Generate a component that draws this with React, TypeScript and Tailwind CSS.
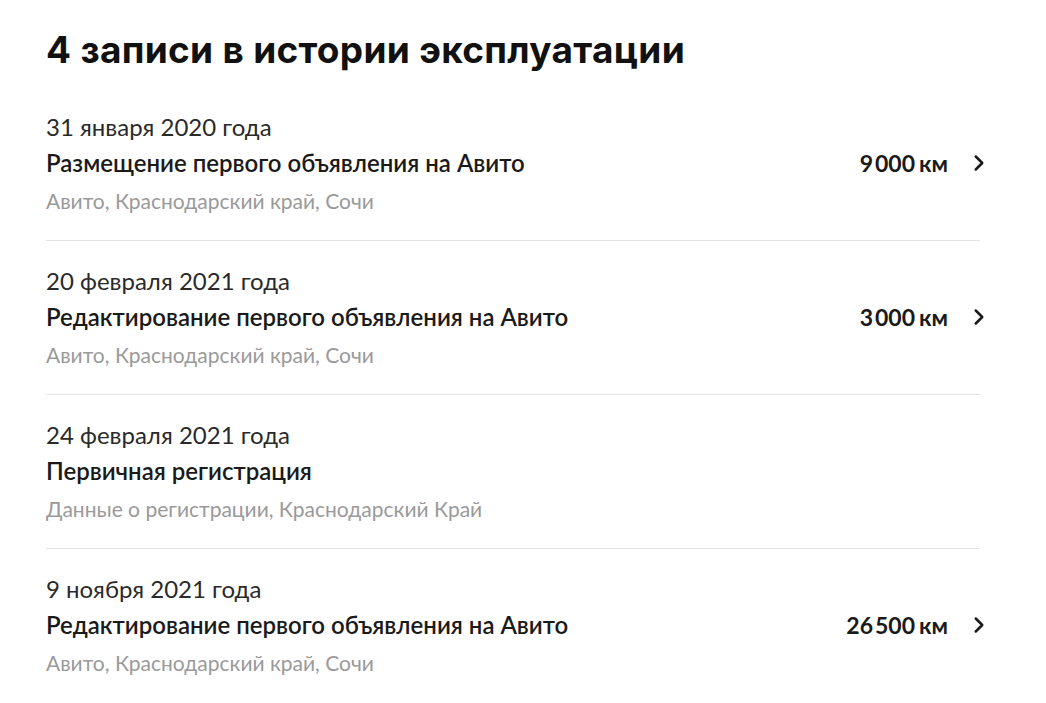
import { ChevronRight } from "lucide-react";

type HistoryEntry = {
  date: string;
  title: string;
  source: string;
  mileage?: string;
};

const ENTRIES: HistoryEntry[] = [
  {
    date: "31 января 2020 года",
    title: "Размещение первого объявления на Авито",
    source: "Авито, Краснодарский край, Сочи",
    mileage: "9 000",
  },
  {
    date: "20 февраля 2021 года",
    title: "Редактирование первого объявления на Авито",
    source: "Авито, Краснодарский край, Сочи",
    mileage: "3 000",
  },
  {
    date: "24 февраля 2021 года",
    title: "Первичная регистрация",
    source: "Данные о регистрации, Краснодарский Край",
  },
  {
    date: "9 ноября 2021 года",
    title: "Редактирование первого объявления на Авито",
    source: "Авито, Краснодарский край, Сочи",
    mileage: "26 500",
  },
];

function Mileage({ value }: { value: string }) {
  const [thousands, rest] = value.split(" ");
  return (
    <span className="flex items-baseline text-[23px] leading-[30px] font-bold text-[#1a1a1a]">
      <span>{thousands}</span>
      <span className="ml-[2px]">{rest}</span>
      <span className="ml-[4px]">км</span>
    </span>
  );
}

function EntryRow({ entry, last }: { entry: HistoryEntry; last: boolean }) {
  return (
    <div
      className={
        last
          ? "flex items-start pt-[26px] pb-[20px]"
          : "flex items-start border-b border-[#e3e3e3] pt-[26px] pb-[25px]"
      }
    >
      <div className="flex-1">
        <div className="text-[24px] leading-[28px] text-[#2a2a2a]">{entry.date}</div>
        <div className="mt-[7px] text-[24px] leading-[30px] font-semibold text-[#1a1a1a]">
          {entry.title}
        </div>
        <div className="mt-[9px] text-[21px] leading-[28px] text-[#9a9a9a]">{entry.source}</div>
      </div>
      {entry.mileage ? (
        <div className="mt-[35px] -mr-[12px] flex items-center gap-[18px]">
          <Mileage value={entry.mileage} />
          <ChevronRight className="size-[26px] text-[#1a1a1a]" strokeWidth={2.3} />
        </div>
      ) : null}
    </div>
  );
}

export default function App() {
  return (
    <div
      className="min-h-[703px] w-[1046px] bg-white px-[46px] pt-[26px]"
      style={{ fontFamily: "Lato, 'Open Sans', sans-serif" }}
    >
      <h2
        className="text-[37px] leading-[48px] font-bold text-[#111] tracking-[0.3px]"
        style={{ fontFamily: "Inter, 'Noto Sans', sans-serif" }}
      >
        4 записи в истории эксплуатации
      </h2>
      <div className="mt-[13px] w-[934px]">
        {ENTRIES.map((entry, index) => (
          <EntryRow key={entry.date} entry={entry} last={index === ENTRIES.length - 1} />
        ))}
      </div>
    </div>
  );
}
